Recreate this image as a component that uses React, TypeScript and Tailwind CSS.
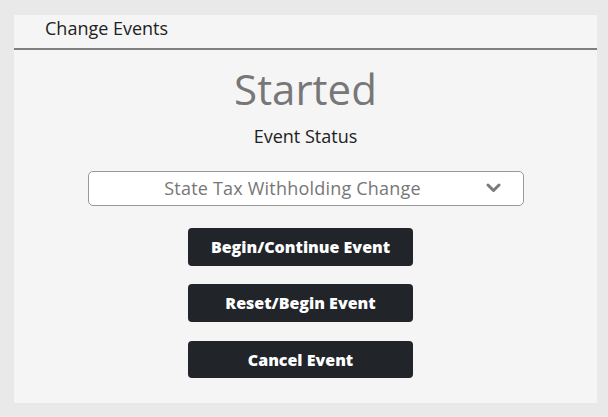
import React from "react";

export default function App() {
  return (
    <div className="w-[608px] h-[417px] bg-[#e9e9e9] pt-[15px] pl-[14px] pr-[11px]" style={{ fontFamily: '"Open Sans", sans-serif' }}>
      <div className="w-[583px] h-[388px] bg-[#f5f5f5] flex flex-col">
        <div className="h-[35px] border-b-2 border-[#7f7f7f] pl-[31px] pt-[1px] text-[18px] leading-[24px] text-[#222]">Change Events</div>
        <div className="flex flex-col items-center">
          <div className="mt-[18px] h-[42px] leading-[42px] text-[42px] text-[#777]">Started</div>
          <div className="mt-[16px] text-[18px] leading-[20px] text-[#222]">Event Status</div>
          <div className="mt-[25px] w-[436px] h-[35px] bg-white border border-[#999] rounded-[5px] relative flex items-center justify-center">
            <span className="text-[18px] tracking-[0.2px] text-[#777] mr-[26px]">State Tax Withholding Change</span>
            <svg className="absolute right-[22px] top-[11px]" width="15" height="10" viewBox="0 0 15 10">
              <path d="M2 2 L7.5 7.5 L13 2" fill="none" stroke="#7a7a7a" strokeWidth="3" strokeLinecap="round" strokeLinejoin="round" />
            </svg>
          </div>
          <div className="mt-[22px] mr-[10px] flex flex-col">
            <button className="w-[225px] h-[38px] bg-[#212529] rounded-[4px] text-white font-extrabold text-[16px]">Begin/Continue Event</button>
            <button className="mt-[18px] w-[225px] h-[38px] bg-[#212529] rounded-[4px] text-white font-extrabold text-[16px]">Reset/Begin Event</button>
            <button className="mt-[19px] w-[225px] h-[37px] bg-[#212529] rounded-[4px] text-white font-extrabold text-[16px]">Cancel Event</button>
          </div>
        </div>
      </div>
    </div>
  );
}
